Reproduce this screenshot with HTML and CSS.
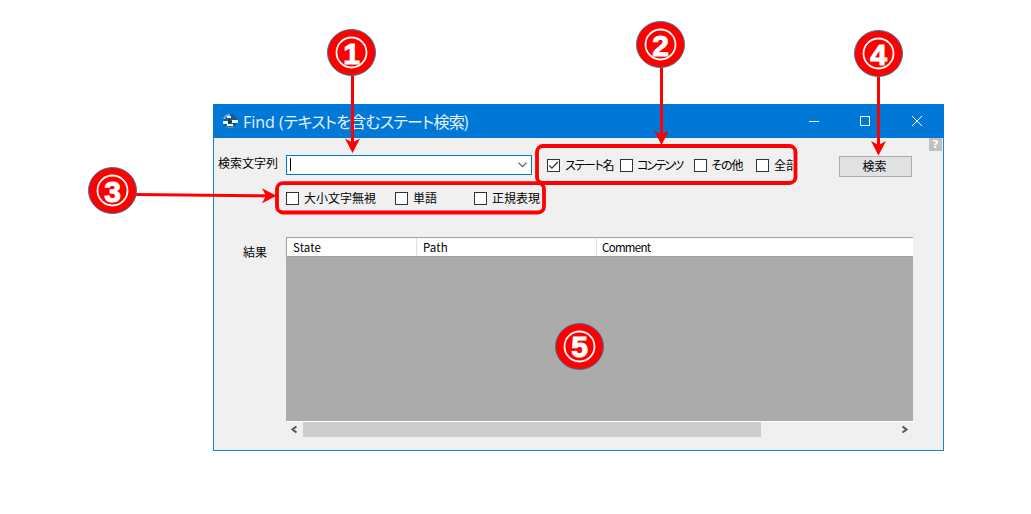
FILE: index.html
```html
<!DOCTYPE html>
<html lang="ja">
<head>
<meta charset="utf-8">
<title>Find</title>
<link rel="stylesheet" href="styles.css">
</head>
<body>
<main class="page">
  <section class="window">
    <header class="titlebar">
      <svg class="app-icon" width="16" height="16" viewBox="0 0 16 16">
        <circle cx="8" cy="8" r="7" fill="#175a91"/>
        <path d="M2 6a6 6 0 0 1 6-4" stroke="#6cb2dc" stroke-width="2" fill="none"/>
        <path d="M4 13.5q4 2 8 0" stroke="#4b91bd" stroke-width="1.5" fill="none"/>
        <path d="M7 6v5M3 9h10" stroke="#092d50" stroke-width="1"/>
        <path d="M5 3h4v2H5zM1 8h5v3H1zM10 7h6v3h-6zM5 11h6v2H5z" fill="#f4fbff"/>
      </svg>
      <h1 class="title"><span class="title-latin">Find (</span><span class="title-ja">テキストを含むステート検索)</span></h1>
      <div class="window-buttons">
        <svg width="10" height="10" viewBox="0 0 10 10"><path d="M0 5.5h10"/></svg>
        <svg width="10" height="10" viewBox="0 0 10 10"><path d="M.5.5h9v9h-9z"/></svg>
        <svg width="10" height="10" viewBox="0 0 10 10"><path d="M0 0l10 10M10 0L0 10"/></svg>
      </div>
    </header>
    <div class="content">
      <div class="search-row">
        <label class="search-label">検索文字列</label>
        <div class="combo"><span class="caret"></span><svg width="9" height="6" viewBox="0 0 9 6"><path d="M.5.7l4 4 4-4" fill="none" stroke="#555" stroke-width="1.2"/></svg></div>
        <div class="targets">
          <label class="check state"><span class="box"><svg width="11" height="11" viewBox="0 0 11 11"><path d="M1.2 5.3l2.7 2.8L9.8 2" fill="none" stroke="#333" stroke-width="1.2"/></svg></span><span class="kana k-state">ステート名</span></label>
          <label class="check contents"><span class="box"></span><span class="kana k-contents">コンテンツ</span></label>
          <label class="check other"><span class="box"></span><span class="kana k-other">その他</span></label>
          <label class="check all"><span class="box"></span><span>全部</span></label>
        </div>
        <button class="search-button">検索</button>
        <span class="help">?</span>
      </div>
      <div class="options">
        <label class="check ignore"><span class="box"></span><span>大小文字無視</span></label>
        <label class="check word"><span class="box"></span><span>単語</span></label>
        <label class="check regex"><span class="box"></span><span>正規表現</span></label>
      </div>
      <div class="results">
        <div class="results-label">結果</div>
        <div class="grid">
          <div class="grid-head"><div><span>State</span></div><div><span>Path</span></div><div><span class="comment">Comment</span></div></div>
          <div class="grid-body"></div>
          <div class="scrollbar">
            <svg width="17" height="15" viewBox="0 0 17 15"><path d="M10.5 4.5l-4 3 4 3" fill="none" stroke="#555" stroke-width="2"/></svg>
            <div class="thumb"></div>
            <svg class="right" width="17" height="15" viewBox="0 0 17 15"><path d="M6.5 4.5l4 3-4 3" fill="none" stroke="#555" stroke-width="2"/></svg>
          </div>
        </div>
      </div>
    </div>
  </section>
  <svg class="callouts" width="1031" height="514" viewBox="0 0 1031 514">
    <defs><path id="head" d="M0 0L-7.5-14.5 0-10.5 7.5-14.5z"/></defs>
    <g fill="none" stroke="#f00">
      <rect x="537" y="146" width="258.5" height="37" rx="6" stroke-width="3.8"/>
      <rect x="277" y="183.2" width="267" height="29.3" rx="6" stroke-width="3.8"/>
      <path d="M352.5 70V143M661.5 65V135M878.5 72V145M135 194.5L266 195.8" stroke-width="3"/>
    </g>
    <g fill="#f00">
      <use href="#head" transform="translate(352.5 153)"/>
      <use href="#head" transform="translate(661.5 145)"/>
      <use href="#head" transform="translate(878.5 155.5)"/>
      <use href="#head" transform="translate(276.5 195.8) rotate(-90)"/>
    </g>
    <g class="badge" transform="translate(351.5 52.5)"><ellipse rx="24" ry="23"/><circle r="15"/><text y="11">1</text></g>
    <g class="badge" transform="translate(660.5 44.5)"><ellipse rx="24" ry="23"/><circle r="15"/><text y="11">2</text></g>
    <g class="badge" transform="translate(112.5 190.5)"><ellipse rx="24" ry="23"/><circle r="15"/><text y="11">3</text></g>
    <g class="badge" transform="translate(878.5 53.5)"><ellipse rx="24" ry="23"/><circle r="15"/><text y="11">4</text></g>
    <g class="badge" transform="translate(579.5 346.5)"><ellipse rx="24" ry="23"/><circle r="15"/><text y="10.5">5</text></g>
  </svg>
</main>
</body>
</html>
```
FILE: styles.css
```css
* { box-sizing: border-box; }
body { margin: 0; background: #fff; font: 12px/16px "Noto Sans CJK JP", sans-serif; color: #000; }
.page { position: relative; width: 1031px; height: 514px; padding: 104px 0 0 213px; overflow: hidden; }
.window { width: 731px; height: 347px; background: #f0f0f0; border: 1px solid #1883d7; border-top: 0; }
.titlebar { height: 34px; margin: 0 -1px; padding: 0 22px 0 9px; background: #0078d7; color: #e5f1fb; display: flex; align-items: center; }
.app-icon { flex: none; }
.title { margin: 0 0 0 5px; font-size: 16px; line-height: 34px; font-weight: 400; white-space: nowrap; }
.title-latin { font-family: "Open Sans", sans-serif; }
.title-ja { font-feature-settings: "palt"; letter-spacing: -.82px; }
.window-buttons { margin-left: auto; display: flex; gap: 41px; }
.window-buttons svg { fill: none; stroke: #fff; stroke-width: 1; }
.window-buttons svg:last-child { margin-left: 1px; }
.search-row { height: 45px; display: flex; align-items: flex-start; }
.search-label { width: 72px; padding: 17px 0 0 4px; white-space: nowrap; }
.combo { width: 246px; height: 20px; margin-top: 17px; border: 1px solid #0078d7; background: #fff; display: flex; align-items: center; justify-content: space-between; padding: 0 4px 0 3px; }
.caret { width: 1px; height: 13px; background: #000; margin-bottom: 2px; }
.check { flex: none; display: flex; align-items: center; gap: 5px; white-space: nowrap; height: 16px; }
.box { flex: none; width: 13px; height: 13px; border: 1px solid #333; background: #fff; display: flex; margin-top: 1px; }
.targets { width: 261px; margin-top: 19px; padding-left: 15px; display: flex; overflow: hidden; }
.state { width: 73px; }
.contents { width: 74px; gap: 4px; }
.other { width: 62px; gap: 4px; }
.kana { font-feature-settings: "palt"; }
.k-state { letter-spacing: -1.3px; }
.k-contents { letter-spacing: -1.9px; }
.k-other { letter-spacing: -1px; }
.search-button { width: 73px; height: 21px; margin: 18px 0 0 46px; padding: 0 2px 2px 0; border: 1px solid #adadad; background: #e1e1e1; color: #000; font: 12px/16px "Noto Sans CJK JP", sans-serif; }
.help { width: 13px; height: 13px; margin-left: 17px; background: #c0c0c0; color: #fff; text-align: center; font: bold 11px/13px "DejaVu Sans", sans-serif; }
.options { display: flex; height: 54px; padding: 7px 0 0 72px; }
.ignore { width: 109px; }
.word { width: 79px; }
.results { display: flex; }
.results-label { width: 72px; padding: 7px 0 0 29px; }
.grid { width: 627px; }
.grid-head { height: 20px; display: grid; grid-template-columns: 130px 180px 1fr; background: #fff; border: solid #a0a0a0; border-width: 1px 0 1px 1px; }
.grid-head div { padding-left: 6px; line-height: 17px; border-right: 1px solid #e0e0e0; }
.grid-head div:last-child { border: 0; padding-left: 5px; }
.grid-head span { font-size: 11.5px; letter-spacing: .1px; }
.grid-head .comment { letter-spacing: -.7px; }
.grid-body { height: 164px; background: #ababab; }
.scrollbar { height: 16px; border-top: 1px solid #fff; display: flex; }
.scrollbar .thumb { width: 458px; height: 15px; background: #cdcdcd; }
.scrollbar .right { margin-left: auto; }
.callouts { position: absolute; left: 0; top: 0; }
.badge ellipse { fill: #f00; stroke: #41719c; stroke-width: 1; }
.badge circle { fill: none; stroke: #fff; stroke-width: 1.8; }
.badge text { fill: #fff; stroke: #fff; stroke-width: 1; font: bold 30px "Liberation Sans", sans-serif; text-anchor: middle; }
```
